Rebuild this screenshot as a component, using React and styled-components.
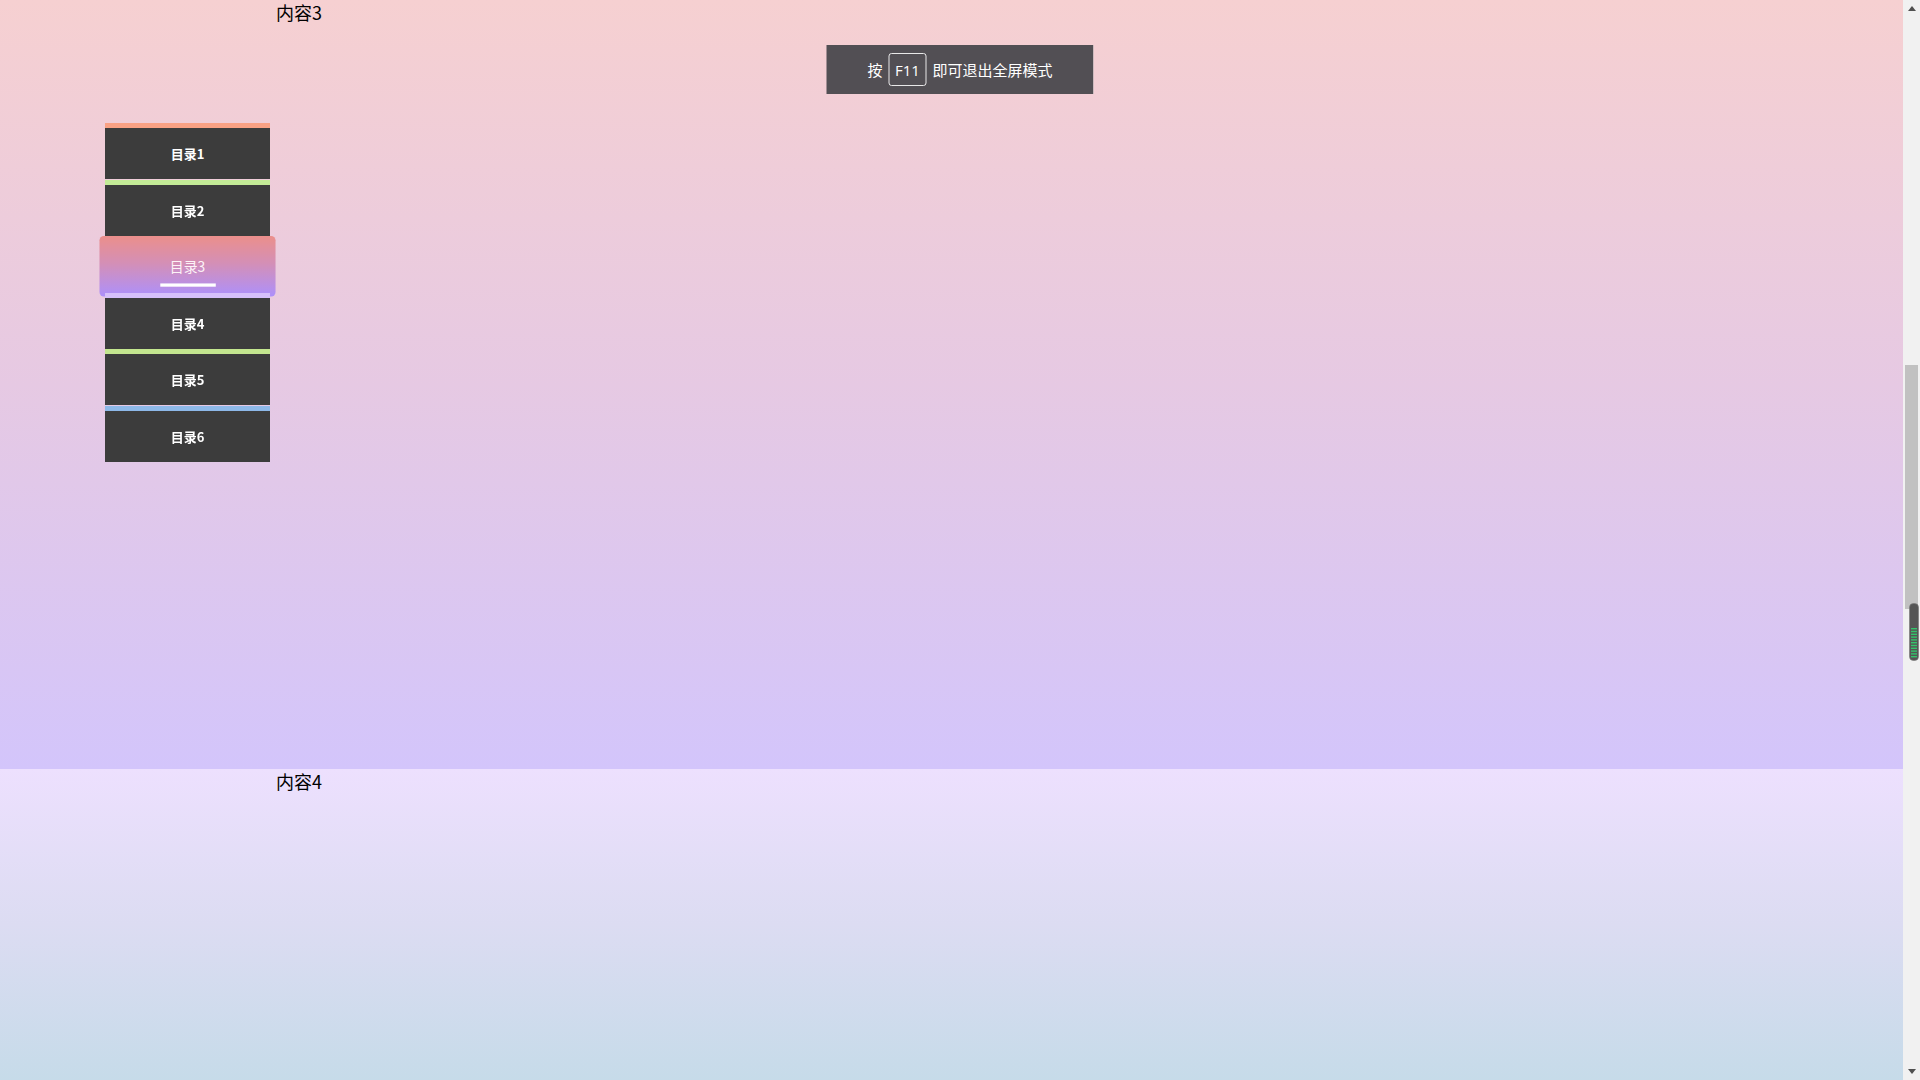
import React from "react";
import styled, { createGlobalStyle, css } from "styled-components";

const GlobalStyle = createGlobalStyle`
    html, body {
        margin: 0;
        padding: 0;
        overflow: hidden;
    }
    body {
        font-family: "Noto Sans CJK SC", "Noto Sans", sans-serif;
    }
`;

const MENU = [
    { title: "目录1", color: "#f9a184" },
    { title: "目录2", color: "#c3eb97" },
    { title: "目录3", color: "#f0a0a0" },
    { title: "目录4", color: "#d6c0fb" },
    { title: "目录5", color: "#c3e68f" },
    { title: "目录6", color: "#8db8e8" },
];

const Page = styled.div`
    display: flex;
    width: 1920px;
    height: 1080px;
    overflow: hidden;
`;

const Main = styled.div`
    flex: 1;
    display: flex;
    flex-direction: column;
    overflow: hidden;
`;

const Section = styled.section`
    flex: 0 0 ${(props) => props.h}px;
    background: ${(props) => props.bg};
    padding-left: 276px;
    box-sizing: border-box;
`;

const SectionTitle = styled.div`
    font-family: "Noto Sans CJK SC", sans-serif;
    font-size: 18px;
    line-height: 24px;
    color: #000;
`;

const Sidebar = styled.nav`
    position: fixed;
    left: 105px;
    top: 123px;
    width: 165px;
    display: flex;
    flex-direction: column;
    gap: 0.6px;
`;

const MenuItem = styled.div`
    position: relative;
    height: 56px;
    box-sizing: border-box;
    border-top: 5px solid ${(props) => props.color};
    background: #3c3c3c;
    color: #fff;
    font-size: 13px;
    font-weight: 700;
    display: flex;
    align-items: center;
    justify-content: center;
    z-index: 1;

    ${(props) => props.active && css`
        z-index: 0;
        border-top: 0;
        border-radius: 4px;
        background: linear-gradient(180deg, #eb8f8b 0%, #d48fb6 45%, #ad90fb 100%);
        transform: scale(1.067, 1.08) translateY(2px);
        font-weight: 400;
        color: #fdf3f7;
        padding-bottom: 2px;
    `}
`;

const Underline = styled.span`
    position: absolute;
    left: 50%;
    bottom: 9px;
    width: 52px;
    height: 3px;
    margin-left: -26px;
    background: #fff;
`;

const Toast = styled.div`
    position: fixed;
    top: 45px;
    left: 50%;
    transform: translateX(-50%);
    width: 267px;
    height: 49px;
    background: #524f54;
    color: #fff;
    font-size: 15px;
    display: flex;
    align-items: center;
    justify-content: center;
    gap: 6px;
`;

const Key = styled.span`
    display: inline-flex;
    align-items: center;
    justify-content: center;
    width: 36px;
    height: 31px;
    border: 1px solid #e8e8e8;
    border-radius: 3px;
    font-family: "Open Sans", "Noto Sans", sans-serif;
    font-size: 15px;
`;

const ScrollBar = styled.div`
    position: relative;
    flex: 0 0 17px;
    display: flex;
    flex-direction: column;
    background: #f1f1f1;
`;

const Arrow = styled.div`
    flex: 0 0 17px;
    display: flex;
    align-items: center;
    justify-content: center;
`;

const Track = styled.div`
    flex: 1;
    display: flex;
    justify-content: center;
`;

const Thumb = styled.div`
    margin-top: 348px;
    width: 13px;
    height: 244px;
    background: #c1c1c1;
`;

const Widget = styled.div`
    position: absolute;
    left: 6px;
    top: 603px;
`;

function Meter() {
    const bars = [];
    for (let i = 0; i < 11; i++) {
        bars.push(<rect key={i} x="2" y={25 + i * 2.8} width="6" height="1.4" fill="#33c46b" />);
    }
    return (
        <svg width="10" height="58" viewBox="0 0 10 58">
            <rect x="0.5" y="0.5" width="9" height="57" rx="4" fill="#555" stroke="#777" strokeWidth="0.6" />
            {bars}
        </svg>
    );
}

export default function App() {
    return (
        <Page>
            <GlobalStyle />
            <Main>
                <Section h={769} bg="linear-gradient(180deg, #f6d0d1 0%, #e6c9e3 50%, #d3c5fb 100%)">
                    <SectionTitle>内容3</SectionTitle>
                </Section>
                <Section h={311} bg="linear-gradient(180deg, #ede0fe 0%, #dcdcf2 50%, #c6dbe9 100%)">
                    <SectionTitle>内容4</SectionTitle>
                </Section>
            </Main>
            <ScrollBar>
                <Arrow>
                    <svg width="8" height="5" viewBox="0 0 8 5"><path d="M0 5 L4 0 L8 5 Z" fill="#505050" /></svg>
                </Arrow>
                <Track>
                    <Thumb />
                </Track>
                <Arrow>
                    <svg width="8" height="5" viewBox="0 0 8 5"><path d="M0 0 L8 0 L4 5 Z" fill="#505050" /></svg>
                </Arrow>
                <Widget>
                    <Meter />
                </Widget>
            </ScrollBar>
            <Sidebar>
                {MENU.map((item, index) => (
                    <MenuItem key={index} color={item.color} active={index === 2}>
                        {item.title}
                        {index === 2 && <Underline />}
                    </MenuItem>
                ))}
            </Sidebar>
            <Toast>
                <span>按</span>
                <Key>F11</Key>
                <span>即可退出全屏模式</span>
            </Toast>
        </Page>
    );
}
